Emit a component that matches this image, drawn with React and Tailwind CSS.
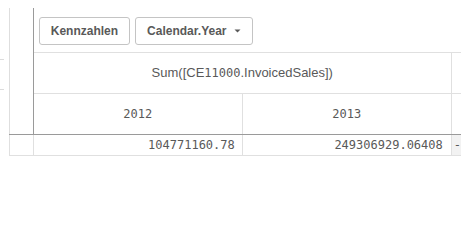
import React from "react";

const mono = { fontFamily: '"DejaVu Sans Mono", monospace' };

function Caret() {
  return (
    <svg width="7" height="4" viewBox="0 0 7 4" className="ml-[7px]">
      <path d="M0.5 0.5 L6.5 0.5 L3.5 3.5 Z" fill="#595959" />
    </svg>
  );
}

function ToolButton({ children, caret }) {
  return (
    <div className="flex h-[28px] items-center rounded-[3px] border border-[#c4c4c4] bg-white pl-[11px] pr-[11px] text-[12px] font-bold text-[#595959]">
      <span>{children}</span>
      {caret && <Caret />}
    </div>
  );
}

export default function App() {
  return (
    <div
      className="flex h-[243px] w-[461px] overflow-hidden bg-white"
      style={{ fontFamily: '"Liberation Sans", Arial, sans-serif' }}
    >
      {/* edge of the neighbouring object */}
      <div className="flex w-[11px] flex-col">
        <div className="mt-[59px] h-px w-[4px] bg-[#dcdcdc]" />
        <div className="mt-[29px] h-px w-[4px] bg-[#dcdcdc]" />
      </div>

      <div className="mt-[8px] flex flex-1 flex-col">
        {/* header block */}
        <div className="flex h-[126px]">
          <div className="w-[25px] border-l border-r border-l-[#dedede] border-r-[#9a9a9a]" />
          <div className="flex flex-1 flex-col">
            <div className="flex h-[45px] gap-[5px] border-b border-[#e0e0e0] pl-[5px] pt-[9px]">
              <ToolButton>Kennzahlen</ToolButton>
              <ToolButton caret>Calendar.Year</ToolButton>
            </div>
            <div className="flex h-[41px] border-b border-[#e0e0e0]">
              <div className="flex w-[418px] items-center justify-center border-r border-[#e0e0e0] text-[13px] text-[#595959]">
                <span>Sum([CE</span>
                <span className="text-[12px]" style={mono}>11000</span>
                <span>.InvoicedSales])</span>
              </div>
              <div className="flex-1" />
            </div>
            <div className="flex flex-1">
              <div
                className="flex w-[209px] items-center justify-center border-r border-[#e0e0e0] text-[12px] text-[#595959]"
                style={mono}
              >
                2012
              </div>
              <div
                className="flex w-[209px] items-center justify-center border-r border-[#e0e0e0] text-[12px] text-[#595959]"
                style={mono}
              >
                2013
              </div>
              <div className="flex-1" />
            </div>
          </div>
        </div>

        {/* data row */}
        <div className="flex h-[22px] border-b border-t border-b-[#e0e0e0] border-t-[#9a9a9a]">
          <div className="w-[25px] border-l border-r border-[#e0e0e0]" />
          <div
            className="flex w-[209px] items-center justify-end border-r border-[#e0e0e0] pr-[7px] text-[12px] text-[#595959]"
            style={mono}
          >
            104771160.78
          </div>
          <div
            className="flex w-[209px] items-center justify-end border-r border-[#e0e0e0] pr-[8px] text-[12px] text-[#595959]"
            style={mono}
          >
            249306929.06408
          </div>
          <div className="flex flex-1 items-center bg-[#f2f2f2] pl-[2px] text-[12px] text-[#595959]" style={mono}>
            -
          </div>
        </div>
      </div>
    </div>
  );
}
